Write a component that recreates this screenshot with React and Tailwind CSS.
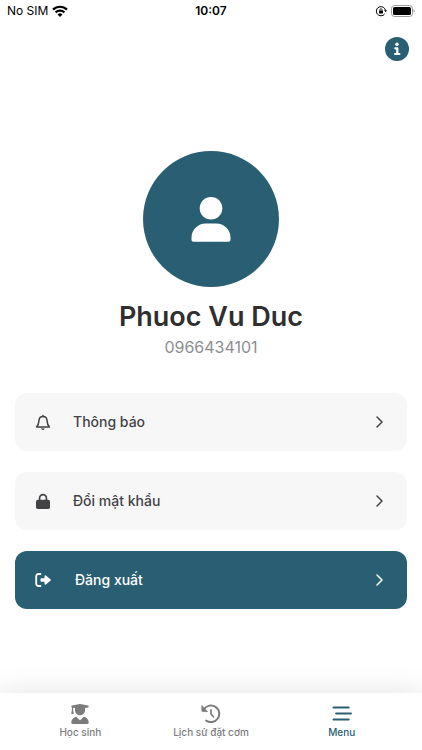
import { useState } from "react";
import { FaUserGraduate } from "react-icons/fa6";

function WifiIcon() {
  return (
    <svg className="h-3 w-4" viewBox="0 0 16 12" fill="none" stroke="currentColor" strokeWidth="2.2">
      <path d="M1 4.6a10 10 0 0 1 14 0" />
      <path d="M3.6 7.4a6.3 6.3 0 0 1 8.8 0" />
      <path d="M8 12 5.5 9.4a3.6 3.6 0 0 1 5 0z" fill="currentColor" stroke="none" />
    </svg>
  );
}

function RotationLockIcon() {
  return (
    <svg className="h-3 w-3" viewBox="0 0 12 12" fill="none" stroke="currentColor">
      <path d="M9.6 9a4.6 4.6 0 1 1 .9-3.4" strokeWidth="1" />
      <path d="M9 5.2h3l-1.4 2z" fill="currentColor" stroke="none" />
      <rect x="4" y="5.4" width="4" height="3" rx="0.5" fill="currentColor" stroke="none" />
      <path d="M4.9 5.6v-.8a1.1 1.1 0 0 1 2.2 0v.8" strokeWidth="0.8" />
    </svg>
  );
}

function BatteryIcon() {
  return (
    <svg className="h-3 w-6" viewBox="0 0 24 12">
      <rect x="0.5" y="0.5" width="21" height="11" rx="3" fill="none" stroke="#9a9a9a" />
      <rect x="2" y="2" width="18" height="8" rx="1.6" fill="#000" />
      <path d="M22.6 4.2v3.6c.7-.3 1.2-1 1.2-1.8s-.5-1.5-1.2-1.8z" fill="#9a9a9a" />
    </svg>
  );
}

function InfoIcon() {
  return (
    <svg className="h-3.5 w-3.5" viewBox="0 0 14 14" fill="none" stroke="currentColor" strokeWidth="2.2" strokeLinecap="round" strokeLinejoin="round">
      <circle cx="7" cy="2.2" r="1.7" fill="currentColor" stroke="none" />
      <path d="M5.3 6.3h2v5.600M5 12h4.400" />
    </svg>
  );
}

function PersonIcon() {
  return (
    <svg className="h-12 w-10" viewBox="0 0 40 48" fill="currentColor">
      <circle cx="20" cy="13.2" r="11.3" />
      <path d="M15 28.6h10c8.4 0 14.5 6.4 14.5 14.2v2c0 1.2-.8 2-2 2h-35c-1.2 0-2-.8-2-2v-2C.5 35 6.6 28.6 15 28.6z" />
    </svg>
  );
}

function BellIcon() {
  return (
    <svg className="h-4 w-4" viewBox="0 0 16 16" fill="none" stroke="currentColor" strokeWidth="1.5" strokeLinejoin="round" strokeLinecap="round">
      <path d="M8 2.6C5.600 2.600 4.200 4.200 4 6.400c-.2 3.200-.5 4.500-2.400 6.600h12.800C12.500 10.900 12.200 9.600 12 6.400c-.2-2.200-1.600-3.800-4-3.800z" />
      <path d="M8 1.500v1" />
      <path d="M6.600 14.700h2.800c-.2.700-.7 1-1.400 1s-1.200-.3-1.400-1z" fill="currentColor" strokeWidth="0.5" />
    </svg>
  );
}

function LockIcon() {
  return (
    <svg className="h-4 w-4" viewBox="0 0 16 16">
      <rect x="1" y="6.8" width="14" height="9.2" rx="1.8" fill="currentColor" />
      <path d="M4.6 7.5V5a3.4 3.4 0 0 1 6.8 0v2.500" fill="none" stroke="currentColor" strokeWidth="1.7" />
    </svg>
  );
}

function LogoutIcon() {
  return (
    <svg className="h-4 w-4" viewBox="0 0 16 16">
      <path d="M5.5 2h-2A2.300 2.300 0 0 0 1.200 4.300v7.400A2.300 2.300 0 0 0 3.500 14h2" fill="none" stroke="currentColor" strokeWidth="1.8" strokeLinecap="round" />
      <path d="M6.5 6.200h3V4c0-.8.8-1.100 1.300-.6l4.700 3.900c.4.400.4 1 0 1.400l-4.700 3.900c-.5.500-1.300.2-1.300-.6V9.800h-3c-.6 0-1-.4-1-1V7.200c0-.6.4-1 1-1z" fill="currentColor" />
    </svg>
  );
}

function ChevronIcon() {
  return (
    <svg className="h-4 w-4" viewBox="0 0 16 16" fill="none" stroke="currentColor" strokeWidth="1.5" strokeLinecap="round" strokeLinejoin="round">
      <path d="m6 3 5 5-5 5" />
    </svg>
  );
}

function HistoryIcon() {
  return (
    <svg className="h-5 w-5" viewBox="0 0 20 20" fill="none" stroke="currentColor" strokeLinecap="round">
      <path d="M3 5.200A8.300 8.300 0 1 1 5.200 16.600" strokeWidth="2" />
      <path d="M.9 1.800v5c0 .5.300.8.800.8h4.500z" fill="currentColor" strokeWidth="0.8" strokeLinejoin="round" />
      <path d="M10 5.800V10l2.500 2.800" strokeWidth="1.700" strokeLinejoin="round" />
    </svg>
  );
}

function MenuIcon() {
  return (
    <svg className="h-5 w-5" viewBox="0 0 20 20" fill="none" stroke="currentColor" strokeWidth="2.2" strokeLinecap="round">
      <path d="M1.6 3.500h15M4.200 9.500h14.700M1.600 15.500h15" />
    </svg>
  );
}

const menuItems = [
  { id: "notifications", label: "Thông báo", icon: <BellIcon /> },
  { id: "password", label: "Đổi mật khẩu", icon: <LockIcon /> },
  { id: "logout", label: "Đăng xuất", icon: <LogoutIcon />, primary: true },
];

const tabs = [
  { id: "students", label: "Học sinh", icon: <FaUserGraduate className="h-5 w-5" /> },
  { id: "history", label: "Lịch sử đặt cơm", icon: <HistoryIcon /> },
  { id: "menu", label: "Menu", icon: <MenuIcon /> },
];

function MenuRow({ item }) {
  return (
    <button
      className={`flex h-[58px] w-full items-center rounded-xl px-5 text-left ${
        item.primary ? "bg-[#2a5f73] text-white" : "bg-[#f7f7f7] text-[#434345]"
      }`}
    >
      <span className="flex w-4 justify-center">{item.icon}</span>
      <span className={`grow text-[14px] font-medium leading-5 ${item.primary ? "pl-6" : "pl-[22px]"}`}>{item.label}</span>
      <ChevronIcon />
    </button>
  );
}

function App() {
  const [activeTab, setActiveTab] = useState("menu");

  return (
    <div className="flex min-h-screen flex-col bg-white font-['Inter',sans-serif]">
      <header className="grid h-[22px] grid-cols-3 items-center px-[7px] text-black">
        <div className="flex items-center gap-1 text-[12px]">
          No SIM <WifiIcon />
        </div>
        <div className="text-center text-[12px] font-semibold">10:07</div>
        <div className="flex items-center justify-end gap-1">
          <RotationLockIcon />
          <BatteryIcon />
        </div>
      </header>

      <main className="flex grow flex-col px-[15px]">
        <div className="flex justify-end pt-[15px]">
          <button aria-label="Info" className="-mr-0.5 flex h-6 w-6 items-center justify-center rounded-full bg-[#2a5f73] text-white">
            <InfoIcon />
          </button>
        </div>

        <section className="flex flex-col items-center pt-[90px]">
          <div className="flex h-[136px] w-[136px] items-center justify-center rounded-full bg-[#2a5f73] text-white">
            <PersonIcon />
          </div>
          <h1 className="mt-3 text-[27px] font-semibold leading-9 text-[#2f2f31]">Phuoc Vu Duc</h1>
          <p className="mt-0.5 text-[16px] leading-5 text-[#8e8e90]">0966434101</p>
        </section>

        <div className="flex flex-col gap-[21px] py-9">
          {menuItems.map((item) => (
            <MenuRow key={item.id} item={item} />
          ))}
        </div>
      </main>

      <nav className="grid h-[57px] grid-cols-3 bg-white px-[15px] shadow-[0_0_30px_rgba(0,0,0,0.12)]">
        {tabs.map((tab) => (
          <button
            key={tab.id}
            onClick={() => setActiveTab(tab.id)}
            className={`flex flex-col items-center pt-[11px] text-[10px] font-medium leading-4 ${
              activeTab === tab.id ? "text-[#2a5f73]" : "text-[#7c7c7e]"
            }`}
          >
            {tab.icon}
            {tab.label}
          </button>
        ))}
      </nav>
    </div>
  );
}

export default App;
